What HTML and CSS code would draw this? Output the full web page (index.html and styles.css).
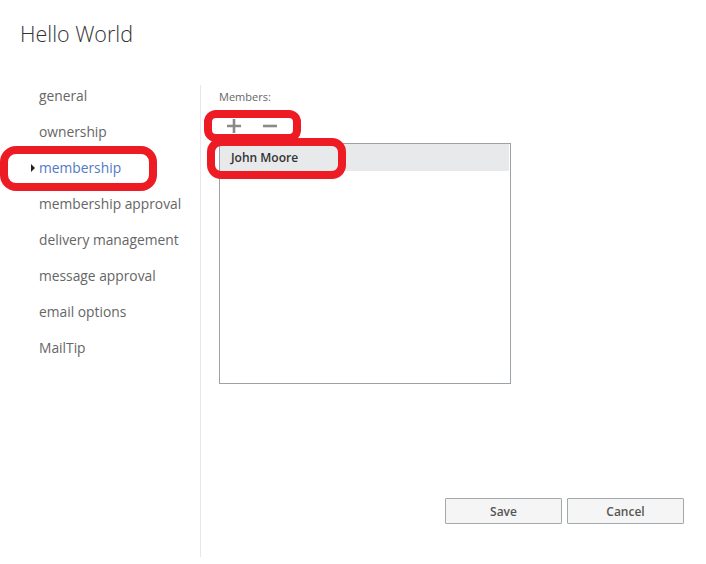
FILE: index.html
```html
<!DOCTYPE html>
<html>
<head>
<meta charset="utf-8">
<link rel="stylesheet" href="styles.css">
</head>
<body>
<div class="page">
  <h1 class="title">Hello World</h1>
  <div class="main">
    <nav class="nav">
      <div class="nav-item">general</div>
      <div class="nav-item">ownership</div>
      <div class="nav-item selected">membership</div>
      <div class="nav-item">membership approval</div>
      <div class="nav-item">delivery management</div>
      <div class="nav-item">message approval</div>
      <div class="nav-item">email options</div>
      <div class="nav-item">MailTip</div>
    </nav>
    <section class="content">
      <div class="label">Members:</div>
      <div class="toolbar">
        <button class="icon-btn" aria-label="add">
          <svg width="16" height="16" viewBox="0 0 16 16"><path d="M8 1V15M1 8H15" stroke="#8a8a8a" stroke-width="2.6" fill="none"/></svg>
        </button>
        <button class="icon-btn" aria-label="remove">
          <svg width="16" height="16" viewBox="0 0 16 16"><path d="M1 8H15" stroke="#8a8a8a" stroke-width="2.6" fill="none"/></svg>
        </button>
      </div>
      <div class="listbox">
        <div class="row selected-row">John Moore</div>
      </div>
      <div class="actions">
        <button class="btn">Save</button>
        <button class="btn">Cancel</button>
      </div>
    </section>
  </div>
  <div class="mark mark-nav"></div>
  <div class="mark mark-tools"></div>
  <div class="mark mark-row"></div>
</div>
</body>
</html>
```
FILE: styles.css
```css
html, body {
  margin: 0;
  padding: 0;
  background: #ffffff;
}
body {
  font-family: "Open Sans", "Noto Sans", sans-serif;
  color: #333;
}
.page {
  position: relative;
  width: 706px;
  height: 564px;
}
.title {
  margin: 0;
  padding: 20px 0 0 20px;
  height: 64px;
  box-sizing: border-box;
  font-size: 21.5px;
  line-height: 28px;
  font-weight: 300;
  color: #333;
}
.main {
  display: flex;
  margin-top: 21px;
  height: 472px;
}
.nav {
  border-right: 1px solid #e8e8e8;
  padding-left: 39px;
  box-sizing: border-box;
  width: 201px;
}
.nav-item {
  position: relative;
  font-size: 13.8px;
  line-height: 22px;
  height: 22px;
  margin-bottom: 14px;
  color: #666;
  white-space: nowrap;
}
.nav-item.selected {
  color: #5279c6;
}
.nav-item.selected::before {
  content: "";
  position: absolute;
  left: -8px;
  top: 7px;
  border-left: 4px solid #222;
  border-top: 4px solid transparent;
  border-bottom: 4px solid transparent;
}
.content {
  flex: 1;
  padding: 4px 22px 0 18px;
  display: flex;
  flex-direction: column;
}
.label {
  font-size: 11px;
  line-height: 16px;
  color: #666;
}
.toolbar {
  display: flex;
  gap: 20px;
  margin-top: 7px;
  height: 28px;
  align-items: center;
  padding-left: 7px;
}
.icon-btn {
  border: none;
  background: none;
  padding: 0;
  width: 16px;
  height: 16px;
  display: block;
}
.icon-btn svg {
  display: block;
}
.listbox {
  margin-top: 3px;
  width: 292px;
  height: 241px;
  box-sizing: border-box;
  border: 1px solid #9ba3a6;
  padding: 0 1px 0 0;
}
.row {
  height: 27px;
  line-height: 27px;
  padding-left: 11px;
  font-size: 12px;
  font-weight: 600;
  color: #333;
}
.selected-row {
  background: #e8e9eb;
}
.actions {
  display: flex;
  justify-content: flex-end;
  gap: 5px;
  margin-top: 114px;
}
.btn {
  width: 117px;
  height: 26px;
  box-sizing: border-box;
  border: 1px solid #a3a9ab;
  border-radius: 1px;
  background: #f5f5f5;
  font-family: "Open Sans", "Noto Sans", sans-serif;
  font-size: 12px;
  font-weight: 600;
  color: #555;
  padding: 0;
}
.mark {
  position: absolute;
  border: 8px solid #ed1c24;
  box-sizing: border-box;
}
.mark-nav {
  left: 0;
  top: 146px;
  width: 157px;
  height: 45px;
  border-radius: 16px;
}
.mark-tools {
  left: 204px;
  top: 110px;
  width: 97px;
  height: 32px;
  border-radius: 12px;
}
.mark-row {
  left: 207px;
  top: 138px;
  width: 139px;
  height: 41px;
  border-radius: 14px;
}
```
